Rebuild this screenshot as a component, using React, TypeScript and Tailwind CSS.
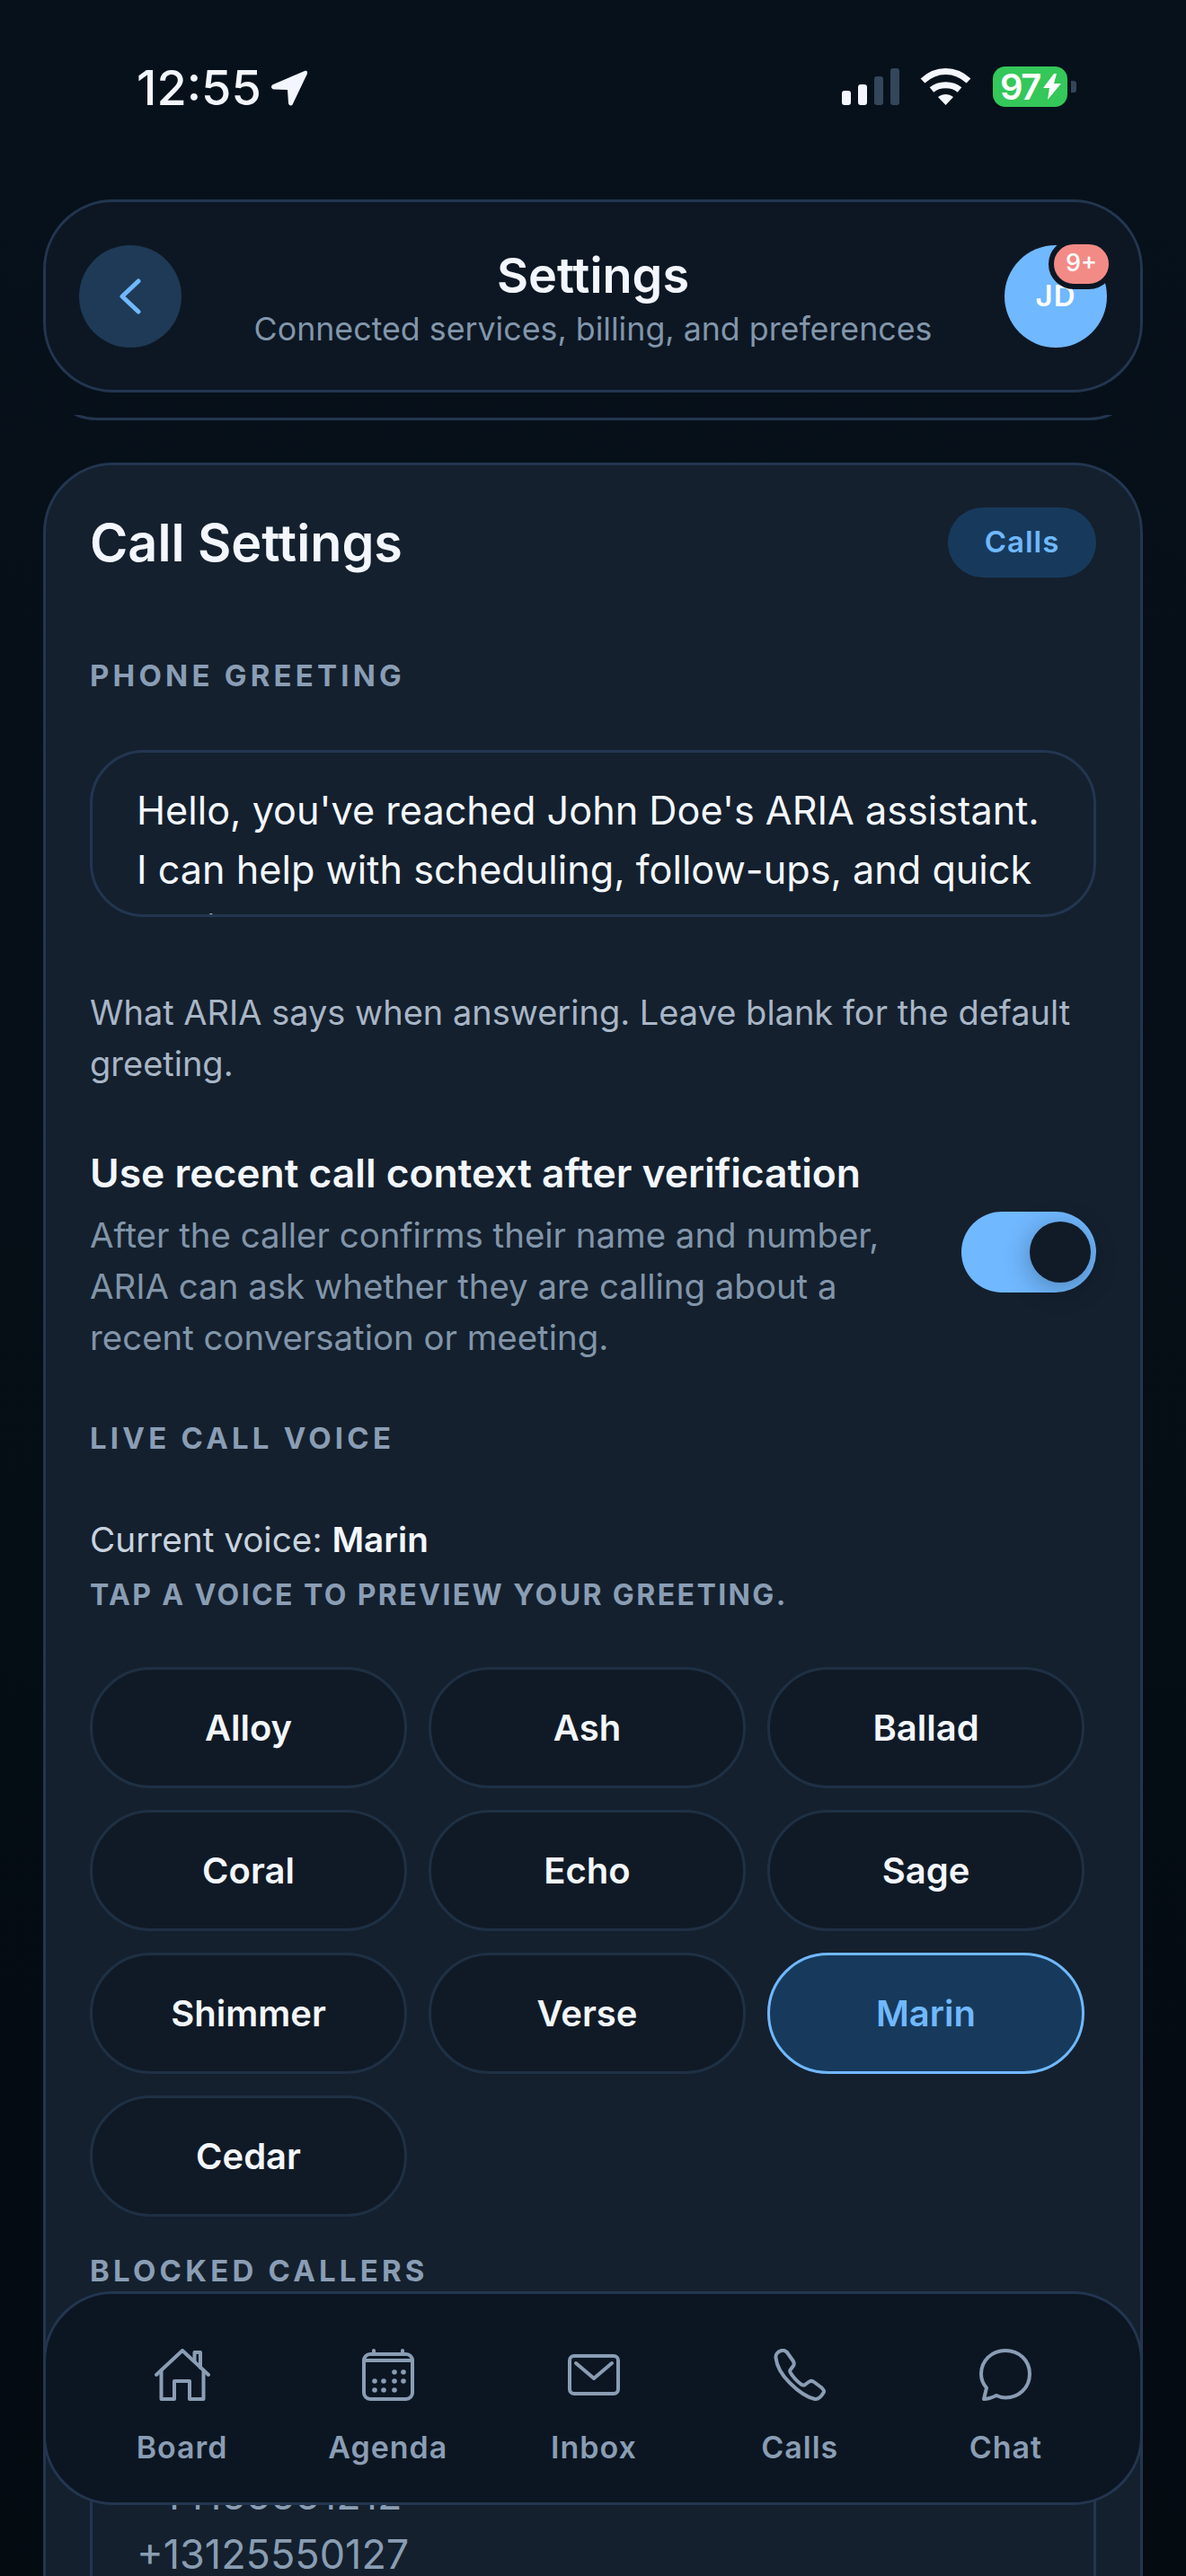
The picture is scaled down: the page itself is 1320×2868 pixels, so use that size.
import { ReactNode } from "react";

const voices = ["Alloy", "Ash", "Ballad", "Coral", "Echo", "Sage", "Shimmer", "Verse", "Marin", "Cedar"];

function SectionLabel({ children }: { children: ReactNode }) {
  return <div className="text-[33px] leading-[44px] font-bold tracking-[4.200px] text-[#8a9db4]">{children}</div>;
}

function HouseIcon() {
  return (
    <svg width="62" height="58" viewBox="0 0 62 58" fill="none" stroke="currentColor" strokeWidth="4" strokeLinecap="round" strokeLinejoin="round">
      <path d="M2 29 31 2l29 27" />
      <path d="M7.500 24v32H22V36h17v20h15.500V24" />
      <path d="M44.500 14V4H51v17" />
    </svg>
  );
}

function CalendarIcon() {
  const dots = [
    [36, 26], [46, 26],
    [14, 36], [24, 36], [36, 36], [46, 36],
    [14, 46], [24, 46], [36, 46],
  ];
  return (
    <svg width="58" height="58" viewBox="0 0 58 58" fill="none" stroke="currentColor" strokeWidth="4" strokeLinecap="round" strokeLinejoin="round">
      <rect x="2" y="6" width="54" height="50" rx="7" />
      <path d="M2 13h54M13 2v3M45 2v3" />
      {dots.map(([cx, cy]) => (
        <circle key={`${cx}-${cy}`} cx={cx} cy={cy} r="2.800" fill="currentColor" stroke="none" />
      ))}
    </svg>
  );
}

function MailIcon() {
  return (
    <svg width="58" height="46" viewBox="0 0 58 46" fill="none" stroke="currentColor" strokeWidth="4" strokeLinecap="round" strokeLinejoin="round">
      <rect x="2" y="2" width="54" height="42" rx="5" />
      <path d="M9 10l20 17 20-17" />
    </svg>
  );
}

function PhoneIcon() {
  return (
    <svg width="58" height="58" viewBox="0 0 58 58" fill="none" stroke="currentColor" strokeWidth="4" strokeLinecap="round" strokeLinejoin="round">
      <path d="M9 2C5 3 2 6 2.500 10 3.500 20 10 30 18 38c8 8 18 16 28 18 4 .5 8-4 10-8 .5-2-1-3-3-5l-8-6c-2-1.500-4-1.500-6 0l-4 3c-1.500 1-3 .5-4.500-.5C26 36 22 32 19 27c-1-1.500-1-3 0-4l3-4c1-1.500 1-3 0-5L15 4c-2-2-4-2.500-6-2Z" />
    </svg>
  );
}

function ChatIcon() {
  return (
    <svg width="58" height="58" viewBox="0 0 58 58" fill="none" stroke="currentColor" strokeWidth="4" strokeLinecap="round" strokeLinejoin="round">
      <path d="M29 2C14 2 2 13 2 28c0 6 2 11 6 15.500L5 56c5 0 10-2 14-4 3 1.500 6 2.500 10 2.500 15 0 27-11 27-26.500S44 2 29 2Z" />
    </svg>
  );
}

const navItems = [
  { label: "Board", icon: <HouseIcon /> },
  { label: "Agenda", icon: <CalendarIcon /> },
  { label: "Inbox", icon: <MailIcon /> },
  { label: "Calls", icon: <PhoneIcon /> },
  { label: "Chat", icon: <ChatIcon /> },
];

function StatusBar() {
  return (
    <div className="h-[222px] pt-[68px] pl-[152px] pr-[122px] flex items-start justify-between">
      <div className="flex items-center gap-[10px] text-[#f3f7fd]">
        <span className="text-[54px] leading-[60px] font-medium">12:55</span>
        <svg width="41" height="40" viewBox="0 0 41 40" fill="currentColor">
          <path d="M38 1 3 16c-3 1.500-2.500 5 1 5.500L19 22l1 15c.5 3 4 3.500 5 .5L41 4c1-2.500-1-4-3-3Z" />
        </svg>
      </div>
      <div className="flex items-start pt-[6px]">
        <div className="flex items-end gap-[7.500px] h-[41px] mt-[2px]">
          <div className="w-[10.500px] h-[16px] rounded-[3px] bg-[#f3f7fd]" />
          <div className="w-[10.500px] h-[23px] rounded-[3px] bg-[#f3f7fd]" />
          <div className="w-[10.500px] h-[32px] rounded-[3px] bg-[#33465a]" />
          <div className="w-[10.500px] h-[41px] rounded-[3px] bg-[#33465a]" />
        </div>
        <svg className="ml-[23px] mt-[1px]" width="57" height="42" viewBox="0 0 57 42" fill="none" stroke="#f3f7fd" strokeWidth="7">
          <path d="M3 15C18 1 39 1 54 15" />
          <path d="M13 25c8-7 23-7 31 0" />
          <path d="M20 33c5-4 12-4 17 0l-8.500 9Z" fill="#f3f7fd" stroke="none" />
        </svg>
        <div className="ml-[24px] w-[83px] h-[45px] rounded-[14px] bg-[#34c759] flex items-center pl-[8px] text-white">
          <span className="text-[40px] leading-[45px] font-semibold tracking-[-1.500px]">97</span>
          <svg className="ml-[3px]" width="20" height="29" viewBox="0 0 20 29" fill="currentColor">
            <path d="M12 0 0 16h7L5 29 20 11h-8l3-11Z" />
          </svg>
        </div>
        <div className="ml-[4px] mt-[16px] w-[6px] h-[13px] rounded-r-[3px] bg-[#33465a]" />
      </div>
    </div>
  );
}

function Header() {
  return (
    <div className="mx-[48px] h-[215px] rounded-[78px] border-[3px] border-[#233650] bg-[#0d1723] flex items-center px-[37px]">
      <div className="w-[114px] h-[114px] rounded-full bg-[#1e3a56] flex items-center justify-center text-[#70b8ff]">
        <svg width="24" height="40" viewBox="0 0 24 40" fill="none" stroke="currentColor" strokeWidth="5" strokeLinecap="round" strokeLinejoin="round">
          <path d="M21 3 3 20l18 17" />
        </svg>
      </div>
      <div className="flex-1 flex flex-col items-center pt-[9px]">
        <div className="text-[54px] leading-[64px] font-semibold text-[#f3f7fd]">Settings</div>
        <div className="text-[35.750px] leading-[54px] text-[#8296ab]">Connected services, billing, and preferences</div>
      </div>
      <div className="relative w-[114px] h-[114px] rounded-full bg-[#70b8ff] flex items-center justify-center text-white text-[33px] font-semibold tracking-[1px]">
        JD
        <div className="absolute top-[-7px] left-[49px] w-[61px] h-[44px] box-content rounded-[28px] bg-[#f28b86] border-[6px] border-[#0d1723] flex items-center justify-center text-[27px] font-medium tracking-normal">
          9+
        </div>
      </div>
    </div>
  );
}

export default function App() {
  return (
    <div className="relative w-[1320px] h-[2868px] overflow-hidden bg-gradient-to-b from-[#07111b] to-[#040b11] font-[Inter,sans-serif]">
      <StatusBar />
      <Header />

      {/* bottom of the card scrolled away under the header */}
      <div className="mt-[25px] mx-[48px] h-[6px] overflow-hidden">
        <div className="h-[120px] -mt-[114px] rounded-[78px] border-[3px] border-[#233650]" />
      </div>

      <div className="mt-[47px] mx-[48px] h-[2400px] rounded-t-[78px] border-[3px] border-[#233650] bg-[#14202e] px-[49px] pt-[47px]">
        <div className="flex items-center justify-between">
          <div className="text-[57.500px] leading-[78px] font-semibold text-[#f3f7fd]">Call Settings</div>
          <div className="h-[78px] w-[165px] rounded-full bg-[#173a5c] flex items-center justify-center text-[33px] font-semibold tracking-[1px] text-[#70b8ff]">
            Calls
          </div>
        </div>

        <div className="mt-[87px]">
          <SectionLabel>PHONE GREETING</SectionLabel>
        </div>

        <textarea
          readOnly
          value={"Hello, you've reached John Doe's ARIA assistant. I can help with scheduling, follow-ups, and quick replies."}
          className="block mt-[61px] w-full h-[186px] rounded-[60px] border-[3px] border-[#233650] bg-[#14202e] px-[49px] pt-[31px] text-[43.200px] leading-[66px] text-[#f3f7fd] overflow-hidden resize-none outline-none"
        />

        <div className="mt-[78px] text-[38px] leading-[57px] text-[#a9b6c6]">
          What ARIA says when answering. Leave blank for the default greeting.
        </div>

        <div className="mt-[60px] flex items-center justify-between">
          <div className="w-[960px]">
            <div className="text-[44.400px] leading-[66px] font-semibold text-[#f3f7fd]">Use recent call context after verification</div>
            <div className="mt-[8px] w-[900px] text-[38.400px] leading-[57px] text-[#8295a9]">
              After the caller confirms their name and number, ARIA can ask whether they are calling about a recent conversation or meeting.
            </div>
          </div>
          <div className="mb-[4px] w-[150px] h-[90px] rounded-full bg-[#70b8ff] flex items-center justify-end pr-[6px]">
            <div className="w-[68px] h-[68px] rounded-full bg-[#111b27] shadow-[0_6px_30px_rgba(0,0,0,0.3)]" />
          </div>
        </div>

        <div className="mt-[61px]">
          <SectionLabel>LIVE CALL VOICE</SectionLabel>
        </div>

        <div className="mt-[63px] text-[38.700px] leading-[57px] text-[#c9d3df]">
          Current voice: <span className="font-semibold text-[#f3f7fd]">Marin</span>
        </div>
        <div className="mt-[11px] text-[32px] leading-[44px] font-bold tracking-[2.400px] text-[#8a9db4]">
          TAP A VOICE TO PREVIEW YOUR GREETING.
        </div>

        <div className="mt-[58px] grid grid-cols-[repeat(3,353px)] gap-x-[24px] gap-y-[24px]">
          {voices.map((v) =>
            v === "Marin" ? (
              <div key={v} className="h-[135px] rounded-full border-[3px] border-[#70b8ff] bg-[#173a5c] flex items-center justify-center text-[40px] font-semibold text-[#70b8ff]">
                {v}
              </div>
            ) : (
              <div key={v} className="h-[135px] rounded-full border-[3px] border-[#1f3044] bg-[#101a26] flex items-center justify-center text-[40px] font-semibold text-[#f3f7fd]">
                {v}
              </div>
            ),
          )}
        </div>

        <div className="mt-[38px]">
          <SectionLabel>BLOCKED CALLERS</SectionLabel>
        </div>

        <div className="mt-[20px] h-[400px] rounded-[60px] border-[3px] border-[#233650] px-[49px] pt-[172px] text-[45px] leading-[66px] text-[#8a9db2]">
          <div>+14155551212</div>
          <div>+13125550127</div>
        </div>
      </div>

      <nav className="absolute left-[48px] top-[2551px] w-[1224px] h-[238px] rounded-[78px] border-[3px] border-[#233650] bg-[#0c1622] pl-[37px] pr-[35px] grid grid-cols-5 text-[#8a9db4]">
        {navItems.map((item) => (
          <div key={item.label} className="flex flex-col items-center">
            <div className="h-[60px] mt-[60px] flex items-center justify-center">{item.icon}</div>
            <div className="mt-[29px] text-[34px] leading-[44px] font-semibold tracking-[1px]">{item.label}</div>
          </div>
        ))}
      </nav>
    </div>
  );
}
